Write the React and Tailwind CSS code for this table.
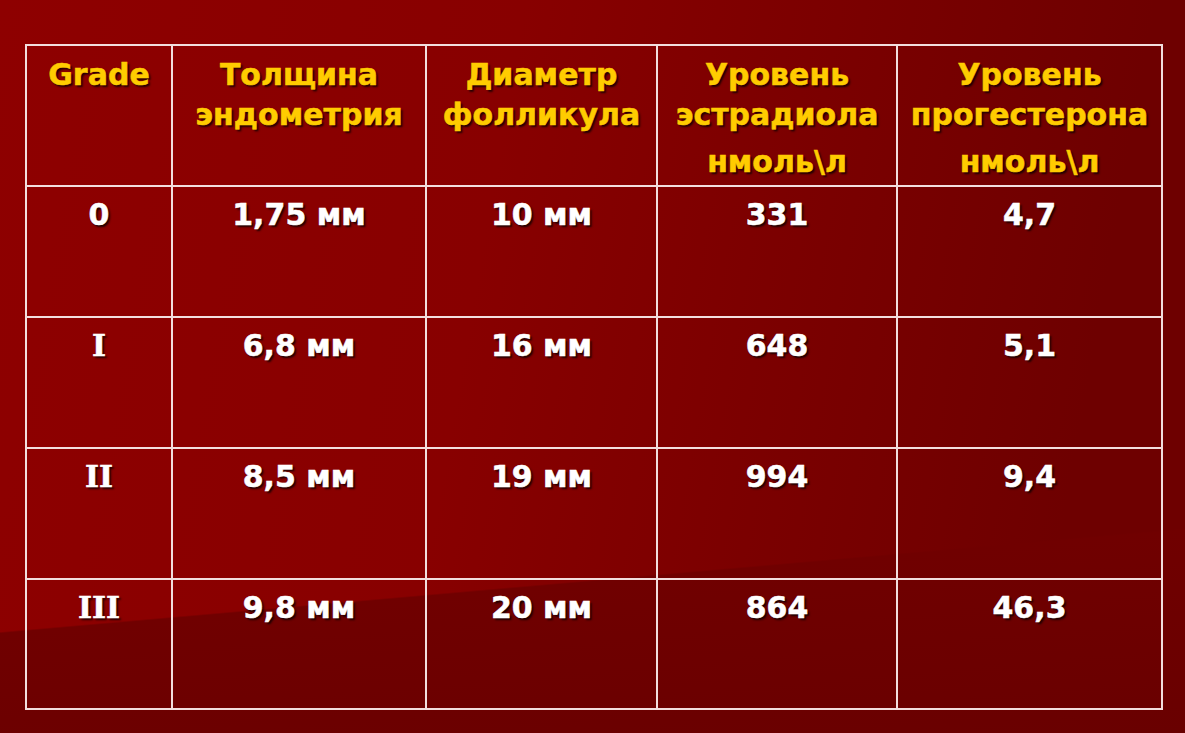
import React from "react";

const header = [
  ["Grade"],
  ["Толщина", "эндометрия"],
  ["Диаметр", "фолликула"],
  ["Уровень", "эстрадиола", "нмоль\\л"],
  ["Уровень", "прогестерона", "нмоль\\л"],
];

const rows = [
  ["0", "1,75 мм", "10 мм", "331", "4,7"],
  ["I", "6,8 мм", "16 мм", "648", "5,1"],
  ["II", "8,5 мм", "19 мм", "994", "9,4"],
  ["III", "9,8 мм", "20 мм", "864", "46,3"],
];

const shadow = "[text-shadow:2px_2px_2px_rgba(15,0,0,0.85)] [-webkit-text-stroke:0.5px_currentColor]";

export default function App() {
  return (
    <div className="w-[1185px] h-[733px] overflow-hidden bg-[linear-gradient(175deg,transparent_75.5%,#700000_75.7%,#690000_100%),linear-gradient(100deg,#8e0000_0%,#880000_40%,#6e0000_88%)] font-['DejaVu_Sans',Verdana,sans-serif] font-bold text-[30px] leading-[40px]">
      <div className="pt-[44px] pl-[25px]">
        <div className="grid w-max grid-cols-[146px_254px_231px_240px_265px] grid-rows-[141px_131px_131px_131px_130px] border-l-2 border-t-2 border-[#f2dede]">
          {header.map((lines, i) => (
            <div
              key={"h" + i}
              className={`border-r-2 border-b-2 border-[#f2dede] pt-[9px] text-center text-[#ffcc00] ${shadow}`}
            >
              {lines.map((l, j) => (
                <div key={j} className={j === 2 ? "mt-[7px]" : ""}>
                  {l}
                </div>
              ))}
            </div>
          ))}
          {rows.map((r, ri) =>
            r.map((c, ci) => (
              <div
                key={ri + "-" + ci}
                className={`border-r-2 border-b-2 border-[#f2dede] pt-[8px] text-center text-white ${shadow} ${
                  ci === 0 && ri > 0 ? "font-['DejaVu_Serif',serif]" : ""
                }`}
              >
                {c}
              </div>
            ))
          )}
        </div>
      </div>
    </div>
  );
}
